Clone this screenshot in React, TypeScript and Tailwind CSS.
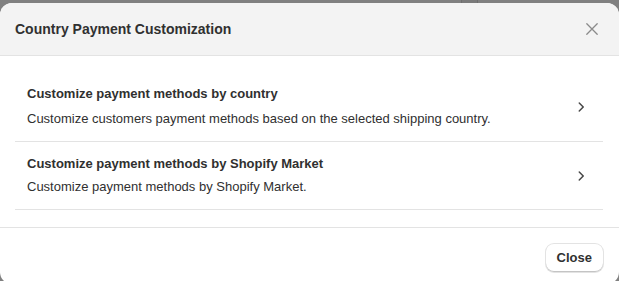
import React from 'react';

const ChevronRight = () => (
  <svg width="20" height="20" viewBox="0 0 20 20" className="shrink-0 text-[#4a4a4a]" fill="currentColor">
    <path d="M7.72 14.53a.75.75 0 0 1 0-1.06l3.47-3.47-3.47-3.47a.75.75 0 0 1 1.06-1.06l4 4a.75.75 0 0 1 0 1.06l-4 4a.75.75 0 0 1-1.06 0Z" />
  </svg>
);

const CloseIcon = () => (
  <svg width="20" height="20" viewBox="0 0 20 20" fill="none" stroke="#8a8a8a" strokeWidth="1.3" strokeLinecap="round">
    <path d="M4.8 4.8 15.2 15.2M15.2 4.8 4.8 15.2" />
  </svg>
);

const options = [
  {
    id: 'country',
    title: 'Customize payment methods by country',
    text: 'Customize customers payment methods based on the selected shipping country.',
    gap: 'gap-[5px]',
  },
  {
    id: 'market',
    title: 'Customize payment methods by Shopify Market',
    text: 'Customize payment methods by Shopify Market.',
    gap: 'gap-[3px]',
  },
];

export default function App() {
  return (
    <div
      className="relative h-screen overflow-hidden bg-[#808080] pt-[3px] text-[#303030]"
      style={{ fontFamily: '"Liberation Sans", Arial, sans-serif' }}
    >
      {/* page behind the backdrop */}
      <div className="absolute left-[461px] top-0 h-[3px] w-[17px] border-x border-[#6e6e6e] bg-[#7a7a7a]" />

      <div className="relative flex h-[281px] flex-col overflow-hidden rounded-xl bg-white">
        {/* Header */}
        <header className="flex items-center justify-between border-b border-[#e3e3e3] bg-[#f3f3f3] py-4 pl-[15px] pr-[17px]">
          <h2 className="text-[14px] font-bold leading-5">Country Payment Customization</h2>
          <button className="flex items-center justify-center">
            <CloseIcon />
          </button>
        </header>

        {/* Body */}
        <div className="pl-[15px] pr-4 pt-4 pb-[17px]">
          {options.map((o) => (
            <button
              key={o.id}
              className="flex w-full items-center justify-between border-b border-[#e3e3e3] px-3 py-3 text-left"
            >
              <div className={`flex flex-col ${o.gap}`}>
                <span className="text-[13px] font-bold leading-5">{o.title}</span>
                <span className="text-[13px] leading-5">{o.text}</span>
              </div>
              <ChevronRight />
            </button>
          ))}
        </div>

        {/* Footer */}
        <footer className="flex justify-end border-t border-[#e3e3e3] px-4 pt-4">
          <button className="h-7 rounded-lg bg-white px-[11px] text-[13px] font-bold leading-5 shadow-[inset_0_-1px_0_#c4c4c4,0_0_0_1px_#e3e3e3]">
            Close
          </button>
        </footer>
      </div>
    </div>
  );
}
